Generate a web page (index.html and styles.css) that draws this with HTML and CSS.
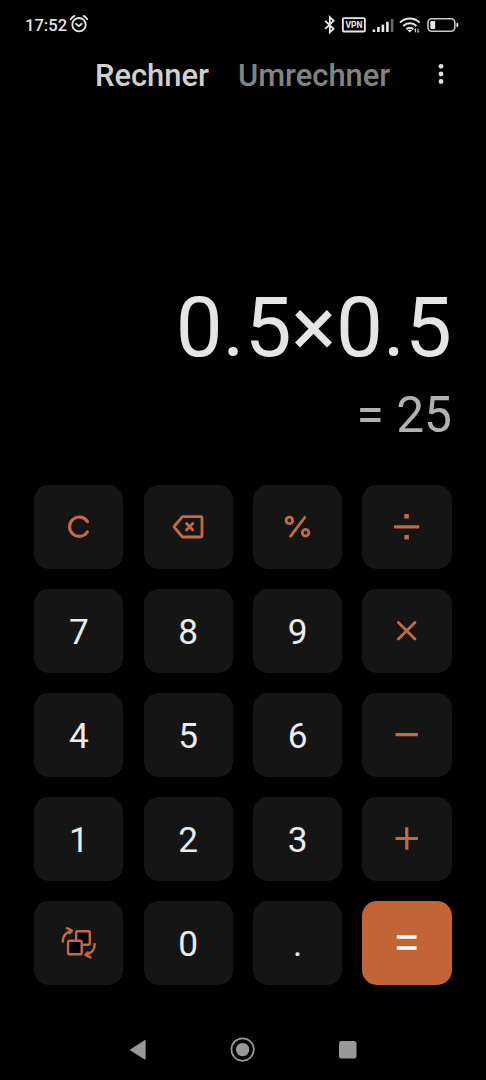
FILE: index.html
```html
<!DOCTYPE html>
<html lang="de">
<head>
<meta charset="utf-8">
<title>Rechner</title>
<link rel="stylesheet" href="styles.css">
</head>
<body>
<div class="phone">
  <div class="status">
    <span class="clock">17:52</span>
    <svg class="alarm" width="20" height="20" viewBox="0 0 20 20"><circle cx="10" cy="10.7" r="6.7"/><path d="M6.9 9.8l3 2.4 2.8-2.4M1.8 5.2a10 10 0 0 1 3.6-3.3M18.2 5.2a10 10 0 0 0-3.6-3.3"/></svg>
    <svg class="indicators" width="140" height="30" viewBox="0 0 140 30">
      <path class="line" d="M1.2 11.8l8.400 8L5.800 23.400V8.200l3.800 3.600-8.400 8"/>
      <rect class="line" x="18.900" y="9.100" width="22" height="13.400" rx="1"/>
      <text class="vpn" x="30" y="19.200" text-anchor="middle" textLength="17" lengthAdjust="spacingAndGlyphs">VPN</text>
      <g class="fill"><rect x="48.600" y="20.500" width="2.600" height="2.500"/><rect x="53.100" y="18" width="2.600" height="5"/><rect x="57.600" y="15.600" width="2.600" height="7.400"/><rect x="62.100" y="12.800" width="2.600" height="10.200"/><rect class="weak" x="66.800" y="10" width="2.600" height="13"/></g>
      <path class="wave" d="M76 13.600a14 14 0 0 1 19.600 0M79.200 17a9.400 9.400 0 0 1 13.200 0M82.400 20.200a5 5 0 0 1 6.800 0"/>
      <path class="fill" d="M83.600 21.200q2.200-1.500 4.400 0L85.800 23.500z"/>
      <path class="tiny" d="M91.400 23.300v-3.600l-1 1M94 19.800v3.600l1-1"/>
      <rect class="case" x="104" y="9.800" width="26.800" height="12.400" rx="3.600"/>
      <rect class="fill" x="106.300" y="12.100" width="4.900" height="7.800" rx=".8"/>
      <rect class="fill" x="132.400" y="14" width="1.800" height="4" rx=".8"/>
    </svg>
  </div>
  <div class="tabs">
    <span class="tab active">Rechner</span>
    <span class="tab">Umrechner</span>
    <svg class="more" width="6" height="22" viewBox="0 0 6 22"><circle cx="3" cy="3.300" r="2.400"/><circle cx="3" cy="11" r="2.400"/><circle cx="3" cy="18.500" r="2.400"/></svg>
  </div>
  <div class="display">
    <div class="expression">0.5×0.5</div>
    <div class="result">= 25</div>
  </div>
  <div class="keypad">
    <div class="key"><svg class="icon" viewBox="0 0 89.2 84"><path d="M53.500 36.600a9.700 9.700 0 1 0 0 10.200" stroke-width="3.100"/></svg></div>
    <div class="key"><svg class="icon" viewBox="0 0 89.2 84"><path d="M38.500 31.600H57a1 1 0 0 1 1 1V51a1 1 0 0 1-1 1H38.500L30.500 42.600q-.6-.8 0-1.600zM42.500 38.600l6.300 6.300M48.800 38.600l-6.300 6.300"/></svg></div>
    <div class="key"><svg class="icon" viewBox="0 0 89.2 84"><circle cx="36.400" cy="35.400" r="3.300"/><circle cx="52.600" cy="47.700" r="3.300"/><path class="butt" d="M52.500 31.500L36.900 52.200"/></svg></div>
    <div class="key"><svg class="icon" viewBox="0 0 89.2 84"><g class="solid"><rect x="32" y="40.200" width="25.200" height="3.200" rx=".4"/><rect x="42.300" y="28.900" width="4.600" height="4.600" rx=".4"/><rect x="42.300" y="50" width="4.600" height="4.600" rx=".4"/></g></svg></div>
    <div class="key">7</div>
    <div class="key">8</div>
    <div class="key">9</div>
    <div class="key"><svg class="icon" viewBox="0 0 89.2 84"><path d="M36.400 33.400l16.600 16.600M53 33.400l-16.600 16.600"/></svg></div>
    <div class="key">4</div>
    <div class="key">5</div>
    <div class="key">6</div>
    <div class="key"><svg class="icon" viewBox="0 0 89.2 84"><rect class="solid" x="33.600" y="40" width="22.300" height="3.200" rx=".4"/></svg></div>
    <div class="key">1</div>
    <div class="key">2</div>
    <div class="key">3</div>
    <div class="key"><svg class="icon" viewBox="0 0 89.2 84"><path class="butt" d="M33.600 41.500h22.300M44.800 30.300v22.400" stroke-width="3.200"/></svg></div>
    <div class="key"><svg class="icon" viewBox="0 0 89.2 84"><g stroke-width="2.400"><g class="cells"><rect x="42.200" y="30.200" width="13.600" height="13.600" rx="1.600"/><rect x="34.100" y="39.700" width="13.600" height="13.600" rx="1.600"/></g><path id="turn" d="M28.800 40.500C28.600 35.500 31.400 31.500 37.600 29.800M33 27.200L38 29.600L35.600 32.200"/><use href="#turn" transform="rotate(180 44.700 41.800)"/></g></svg></div>
    <div class="key">0</div>
    <div class="key">.</div>
    <div class="key equals"><svg class="icon" viewBox="0 0 89.2 84"><path class="butt" d="M34.800 36h19.800M34.800 47h19.800" stroke-width="3.400"/></svg></div>
  </div>
  <div class="nav">
    <svg width="18" height="24" viewBox="0 0 18 24"><path d="M1.200 11.900L16.100 2.400V21.200z" stroke-width="1" stroke-linejoin="round"/></svg>
    <svg width="26" height="26" viewBox="0 0 26 26"><circle cx="12.600" cy="12.600" r="11.200" fill="none" stroke-width="1.700"/><circle cx="12.600" cy="12.600" r="6.700" stroke="none"/></svg>
    <svg width="18" height="18" viewBox="0 0 18 18"><rect y="0" width="17.500" height="17.500" rx="2.500" stroke="none"/></svg>
  </div>
</div>
</body>
</html>
```
FILE: styles.css
```css
* { box-sizing: border-box; }
body { margin: 0; background: #000; font-family: Roboto, sans-serif; }
.phone { width: 486px; height: 1080px; display: flex; flex-direction: column; background: #000; overflow: hidden; }
.status { height: 50px; padding: 0 26px 0 25px; display: flex; align-items: center; color: #e4e4e4; }
.clock { font-size: 16.6px; font-weight: 500; line-height: 50px; width: 44px; padding-top: 1px; }
.alarm { fill: none; stroke: #e4e4e4; stroke-width: 1.8; stroke-linecap: round; margin-top: -2px; }
.indicators { margin-left: auto; margin-right: -4px; margin-top: -3px; }
.line { fill: none; stroke: #e8e8e8; stroke-width: 1.8; }
.vpn { fill: #e8e8e8; font-size: 9px; font-weight: 700; }
.fill { fill: #e8e8e8; }
.weak { fill: #686868; }
.wave { fill: none; stroke: #e8e8e8; stroke-width: 2; }
.tiny { fill: none; stroke: #e8e8e8; stroke-width: 1; }
.case { fill: none; stroke: #c8c8c8; stroke-width: 1.6; }
.tabs { height: 50px; padding: 1px 42px 0 95px; display: flex; align-items: center; font-size: 30.9px; font-weight: 500; line-height: 50px; }
.tab { color: #838383; }
.tab.active { color: #d0d0d0; margin-right: 29px; }
.more { margin-left: auto; margin-top: -3px; fill: #dedede; }
.display { height: 385px; padding: 179px 34px 0 0; text-align: right; }
.expression { font-size: 83.5px; line-height: 98px; color: #e5e5e5; }
.result { font-size: 49.7px; line-height: 58px; margin-top: 9px; color: #b1b1b1; }
.keypad { display: grid; grid-template-columns: repeat(4, 89.2px); grid-auto-rows: 84px; gap: 20px 20.2px; padding-left: 34.2px; }
.key { display: flex; align-items: center; justify-content: center; background: #151515; border-radius: 15px; color: #ececec; font-size: 35.2px; line-height: 82px; padding-top: 2px; }
.key:has(.icon) { padding: 0; }
.icon { width: 100%; height: 100%; fill: none; stroke: #c26b43; stroke-width: 2.8; stroke-linecap: round; stroke-linejoin: round; }
.solid { fill: #c26b43; stroke: none; }
.icon .butt { stroke-linecap: butt; }
.cells { fill: #000; }
.key.equals { background: #c36436; }
.equals .icon { stroke: #fff; }
.nav { flex: 1; display: flex; align-items: center; justify-content: space-between; padding: 34px 129px 0 129px; fill: #999; stroke: #999; }
```
